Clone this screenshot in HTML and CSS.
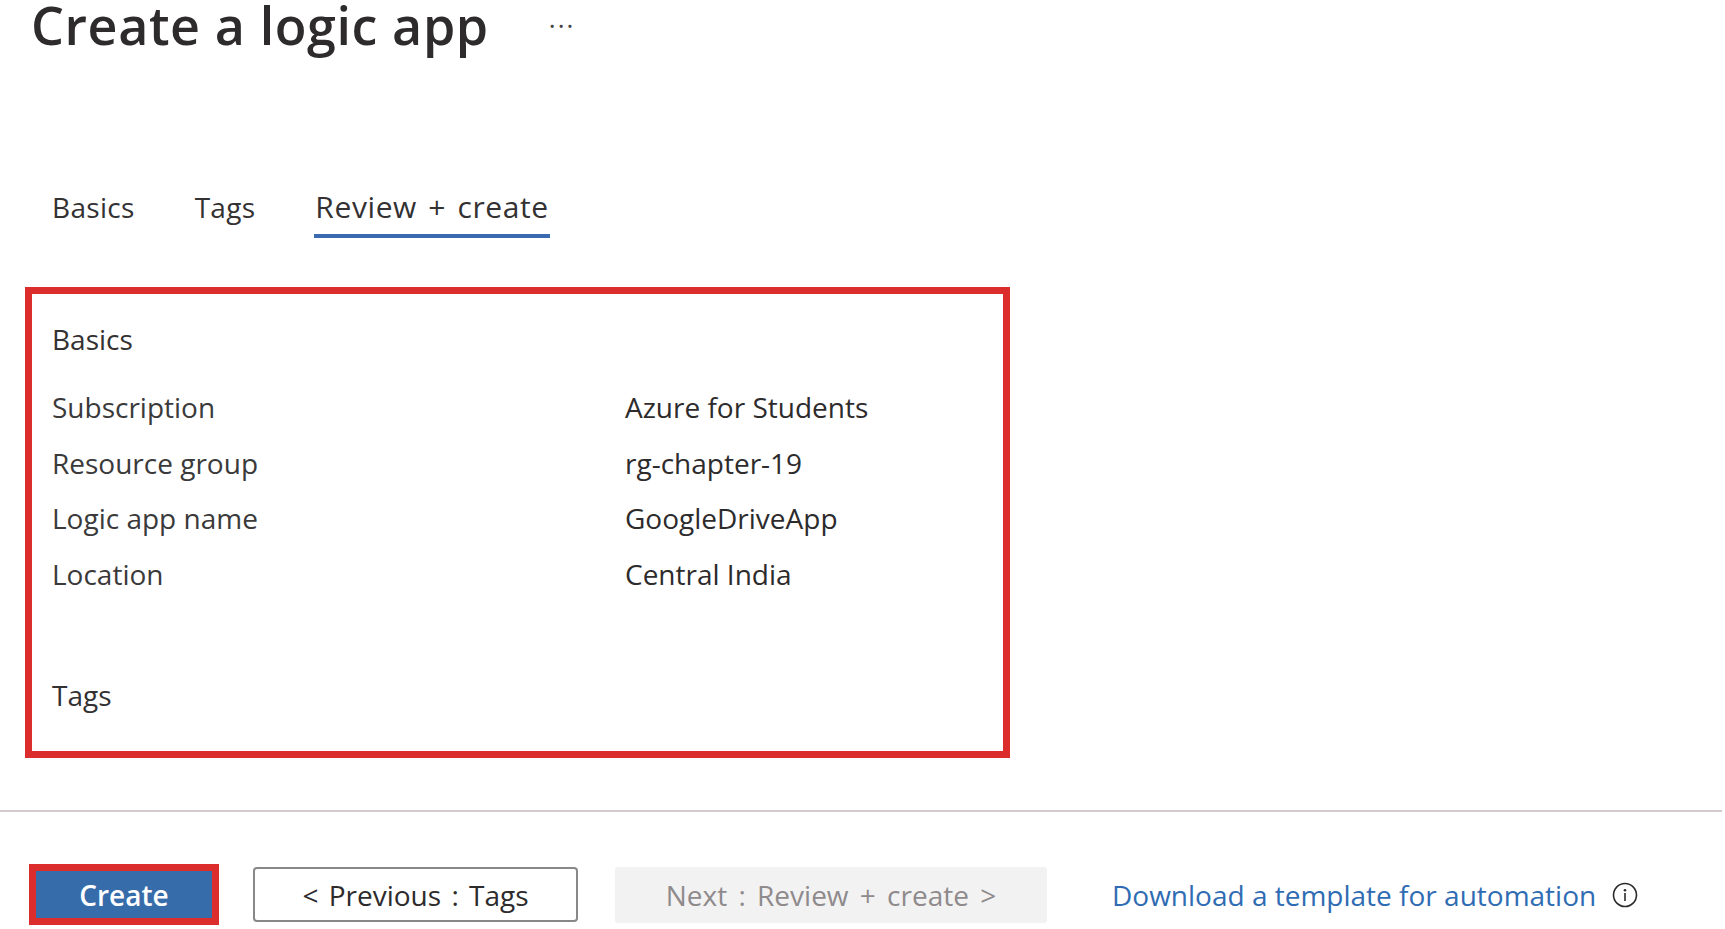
FILE: index.html
```html
<!DOCTYPE html>
<html lang="en">
<head>
<meta charset="utf-8">
<title>Create a logic app</title>
<link rel="stylesheet" href="styles.css">
</head>
<body>
<div class="page">
  <header class="header">
    <h1 class="title">Create a logic app</h1>
    <span class="more">&middot;&middot;&middot;</span>
  </header>

  <nav class="tabs">
    <span class="tab">Basics</span>
    <span class="tab">Tags</span>
    <span class="tab tab-active">Review + create</span>
  </nav>

  <section class="review">
    <h2 class="section-title">Basics</h2>
    <div class="rows">
      <div class="row"><span class="label">Subscription</span><span class="value">Azure for Students</span></div>
      <div class="row"><span class="label">Resource group</span><span class="value">rg-chapter-19</span></div>
      <div class="row"><span class="label">Logic app name</span><span class="value">GoogleDriveApp</span></div>
      <div class="row"><span class="label">Location</span><span class="value">Central India</span></div>
    </div>
    <h2 class="section-title section-tags">Tags</h2>
  </section>

  <footer class="footer">
    <div class="create-frame"><button class="btn btn-primary">Create</button></div>
    <button class="btn btn-secondary">&lt; Previous : Tags</button>
    <button class="btn btn-disabled">Next : Review + create &gt;</button>
    <a class="link" href="#">Download a template for automation</a>
    <svg class="info" width="26" height="26" viewBox="0 0 26 26">
      <circle cx="13" cy="13" r="11.5" fill="none" stroke="#2b2b2b" stroke-width="1.6"/>
      <circle cx="13" cy="8.2" r="1.3" fill="#2b2b2b"/>
      <rect x="12.2" y="11" width="1.6" height="8" fill="#2b2b2b"/>
    </svg>
  </footer>
</div>
</body>
</html>
```
FILE: styles.css
```css
* { box-sizing: border-box; }
html, body { margin: 0; padding: 0; background: #ffffff; }
body {
  font-family: "Open Sans", "Noto Sans", sans-serif;
  color: #323130;
  width: 1725px;
  height: 929px;
  overflow: hidden;
}
.page { position: relative; }

.header {
  display: flex;
  align-items: center;
  height: 54px;
  padding-left: 31px;
  margin-top: -2px;
}
.title {
  margin: 0;
  font-size: 52px;
  font-weight: 600;
  line-height: 54px;
  color: #2d2b2c;
  letter-spacing: 0.6px;
}
.more {
  margin-left: 60px;
  font-size: 26px;
  line-height: 1;
  color: #444;
  letter-spacing: 2px;
}

.tabs {
  display: flex;
  gap: 54px;
  padding-left: 49px;
  margin-top: 135px;
  align-items: flex-end;
}
.tab {
  font-size: 28px;
  line-height: 40px;
  padding: 0 3px 7px;
  border-bottom: 4px solid transparent;
  color: #333132;
  letter-spacing: 0.3px;
}
.tab-active {
  border-bottom-color: #3a6bb0;
  font-size: 30px;
  letter-spacing: 0.6px;
  word-spacing: 3px;
  padding: 0 1px 7px;
  margin-left: 2px;
}

.review {
  margin: 49px 0 0 25px;
  width: 985px;
  height: 471px;
  border: 7px solid #dc2d2d;
  padding: 25px 20px 0;
}
.section-title {
  margin: 0;
  font-size: 28px;
  font-weight: 400;
  line-height: 40px;
  color: #333132;
}
.rows {
  margin-top: 28px;
  display: flex;
  flex-direction: column;
  gap: 15.5px;
}
.row {
  display: grid;
  grid-template-columns: 573px 1fr;
  font-size: 28px;
  line-height: 40px;
}
.label { color: #3b3a3b; }
.value { color: #2d2b2c; }
.section-tags { margin-top: 81px; }

.footer {
  margin-top: 52px;
  border-top: 2px solid #d3cacd;
  width: 1722px;
  display: flex;
  align-items: center;
  padding: 52px 0 0 29px;
}
.btn {
  font-family: inherit;
  font-size: 28px;
  margin: 0;
  cursor: pointer;
}
.create-frame {
  border: 7px solid #dc2d2d;
  width: 190px;
  height: 61px;
}
.btn-primary {
  width: 100%;
  height: 100%;
  border: 0;
  background: #376cab;
  color: #ffffff;
  font-weight: 600;
}
.btn-secondary {
  margin-left: 34px;
  width: 325px;
  height: 55px;
  background: #ffffff;
  border: 2px solid #8a8886;
  border-radius: 4px;
  color: #2d2b2c;
  word-spacing: 3px;
}
.btn-disabled {
  margin-left: 37px;
  width: 432px;
  height: 56px;
  background: #f2f2f2;
  border: 0;
  border-radius: 3px;
  color: #8f8a8c;
  word-spacing: 4px;
}
.link {
  margin-left: 65px;
  font-size: 28px;
  color: #2f6cb3;
  text-decoration: none;
}
.info { margin-left: 16px; }
```
